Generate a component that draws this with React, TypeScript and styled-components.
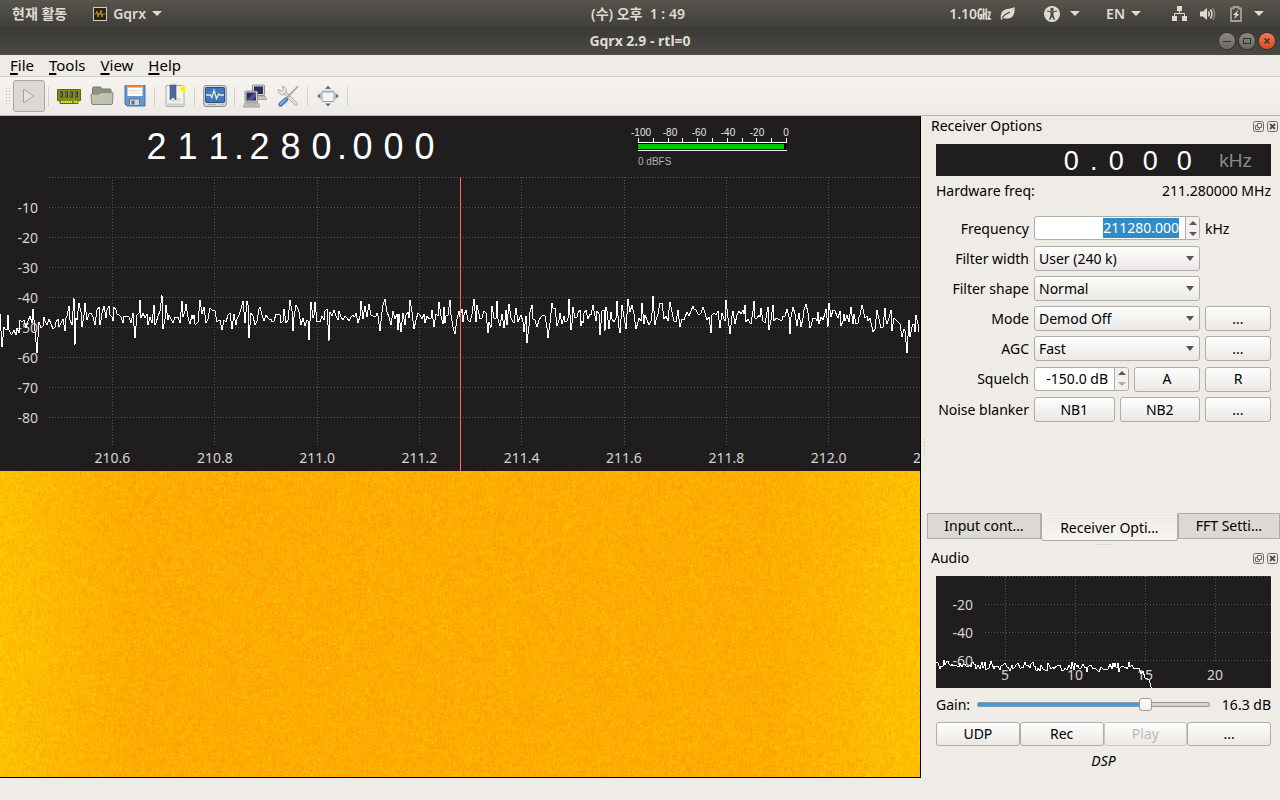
import React, { useEffect, useLayoutEffect, useRef, useState } from "react";
import styled, { createGlobalStyle, css } from "styled-components";

const UI_FONT = `"Noto Sans", "Noto Sans CJK KR", sans-serif`;
const DIGIT_FONT = `"Liberation Sans", Arial, sans-serif`;

const GlobalStyle = createGlobalStyle`
  * { box-sizing: border-box; }
  body {
    margin: 0;
    background: #efebe7;
    color: #000;
    font: 14px/20px ${UI_FONT};
  }
  button, input, select { font: inherit; color: inherit; margin: 0; }
  button { padding: 0; cursor: default; }
  ::selection { background: #308cc6; color: #fff; }
`;

/* ---------- data ---------- */

function makeRandom(seed: number) {
  let s = seed;
  return () => {
    s = (s + 0x6d2b79f5) | 0;
    let t = Math.imul(s ^ (s >>> 15), 1 | s);
    t = (t + Math.imul(t ^ (t >>> 7), 61 | t)) ^ t;
    return ((t ^ (t >>> 14)) >>> 0) / 4294967296;
  };
}

const SPECTRUM_PEAKS: Record<number, number> = {
  2: 170, 37: 176, 33: 132, 74: 121, 75: 168, 85: 126, 135: 161, 162: 118, 182: 124,
  200: 123, 249: 161, 290: 123, 309: 163, 329: 164, 385: 122, 410: 123, 450: 123,
  474: 122, 488: 156, 497: 124, 527: 166, 548: 161, 569: 122, 600: 158, 617: 124,
  653: 119, 670: 125, 726: 123, 754: 124, 790: 157, 829: 126, 873: 155, 892: 154, 907: 176,
};

function spectrumPoints() {
  const rnd = makeRandom(2118);
  const out: string[] = [];
  let skip = 0;
  for (let x = 0; x < 920; x++) {
    const peak = SPECTRUM_PEAKS[x];
    if (peak === undefined && skip > 0) {
      skip--;
      continue;
    }
    const left = Math.max(0, 1 - x / 90);
    const right = Math.max(0, (x - 840) / 80);
    const base = 139 + 12 * left + 10 * Math.min(1, right);
    const spread = ((rnd() + rnd() + rnd()) / 3 - 0.5) * 42;
    const dip = rnd() > 0.9 ? rnd() * 9 : 0;
    out.push(`${x},${peak ?? Math.round(base + spread + dip)}`);
    skip = rnd() > 0.35 ? 1 : 0;
  }
  return out.join(" ");
}

function audioPoints() {
  const rnd = makeRandom(77);
  const out: string[] = [];
  for (let x = 0; x <= 216; x += rnd() > 0.5 ? 2 : 1) {
    let base = 89 + Math.min(2, x / 60);
    if (x > 198) base += (x - 198) ** 2 / 14;
    out.push(`${x},${Math.round(base + (rnd() + rnd() - 1) * 6)}`);
  }
  return out.join(" ");
}

const SPECTRUM = spectrumPoints();
const AUDIO = audioPoints();

/* ---------- desktop bar and title bar ---------- */

const Window = styled.div`
  display: flex;
  flex-direction: column;
  min-height: 100vh;
`;

const DesktopBar = styled.header`
  display: grid;
  grid-template-columns: 1fr auto 1fr;
  align-items: center;
  height: 27px;
  padding: 0 16px 0 12px;
  background: linear-gradient(#57544d, #403f3a);
  color: #dfdbd2;
  font-size: 14px;
`;

const BarGroup = styled.div<{ $end?: boolean }>`
  display: flex;
  align-items: center;
  justify-content: ${(p) => (p.$end ? "flex-end" : "flex-start")};
`;

const BarItem = styled.button<{ $left?: number; $gap?: number }>`
  display: flex;
  align-items: center;
  gap: ${(p) => p.$gap ?? 6}px;
  border: 0;
  background: none;
  font-weight: 600;
  white-space: pre;
  margin-left: ${(p) => p.$left ?? 0}px;
`;

const Caret = styled.span`
  width: 0;
  height: 0;
  border: 5px solid transparent;
  border-top-color: #dfdbd2;
  border-bottom-width: 0;
`;

const TitleBar = styled.div`
  display: grid;
  grid-template-columns: 1fr auto 1fr;
  align-items: center;
  height: 28px;
  padding: 0 5px;
  background: linear-gradient(#3c3b37 10%, #4a4944);
  color: #dfdbd2;
`;

const Title = styled.h1`
  grid-column: 2;
  margin: 0;
  font-size: 14px;
  line-height: 20px;
  font-weight: 700;
`;

const WindowButtons = styled.div`
  display: flex;
  justify-content: flex-end;
  gap: 4px;
`;

const RoundButton = styled.button<{ $close?: boolean }>`
  display: grid;
  place-items: center;
  width: 16px;
  height: 16px;
  border: 0;
  border-radius: 50%;
  background: ${(p) => (p.$close ? "linear-gradient(#f2795a, #df4a1b)" : "linear-gradient(#8b8982, #6b6963)")};
  box-shadow: 0 0 0 1px #33322e;
  color: #33322e;
`;

/* ---------- menu and tool bars ---------- */

const MenuBar = styled.nav`
  display: flex;
  align-items: flex-start;
  gap: 15px;
  height: 22px;
  padding-left: 10px;
  border-bottom: 1px solid #cfccc8;
  font-size: 15px;
`;

const MenuButton = styled.button`
  border: 0;
  background: none;
  &::first-letter {
    text-decoration: underline;
    text-decoration-thickness: 2px;
    text-underline-offset: 2px;
  }
`;

const ToolBar = styled.div`
  display: flex;
  align-items: center;
  height: 39px;
  padding-left: 5px;
  background: linear-gradient(#f7f4f0, #eeeae6);
  border-bottom: 1px solid #b7b4b0;
`;

const dots = css`
  background-image: radial-gradient(circle, #c2bfbb 0 0.8px, transparent 1px);
  background-size: 3px 3px;
`;

const Grip = styled.span`
  width: 6px;
  height: 18px;
  margin-right: 2px;
  ${dots}
`;

const ToolButton = styled.button<{ $pressed?: boolean }>`
  display: grid;
  place-items: center;
  width: ${(p) => (p.$pressed ? 32 : 33)}px;
  height: 32px;
  border: 1px solid ${(p) => (p.$pressed ? "#aaa6a2" : "transparent")};
  border-radius: 3px;
  background: ${(p) => (p.$pressed ? "#dcd8d4" : "none")};
`;

const ToolSeparator = styled.span`
  width: 1px;
  height: 19px;
  margin: 0 3px;
  background: #d3d0cc;
`;

/* ---------- main split ---------- */

const Body = styled.main`
  display: grid;
  grid-template-columns: minmax(0, 1fr) 359px;
  flex: 1;
  padding-bottom: 22px;
`;

const ReceiverView = styled.section`
  display: flex;
  flex-direction: column;
  background: #1f1d1e;
  border-right: 1px solid #000;
  border-bottom: 1px solid #000;
`;

const ViewHeader = styled.div`
  display: flex;
  height: 61px;
  padding-left: 141px;
  gap: 191px;
`;

const Digits = styled.output<{ $small?: boolean }>`
  display: flex;
  color: #fff;
  font-family: ${DIGIT_FONT};
  font-size: ${(p) => (p.$small ? 27 : 36)}px;
  line-height: ${(p) => (p.$small ? 35 : 62)}px;
`;

const Digit = styled.span<{ $w: number }>`
  width: ${(p) => p.$w}px;
  text-align: center;
`;

const Plot = styled.svg<{ $h: number }>`
  display: block;
  width: 100%;
  height: ${(p) => p.$h}px;
  background: #1f1d1e;
  font-family: ${UI_FONT};
  font-size: 14px;
  shape-rendering: crispEdges;
  & .grid { stroke: #57555a; stroke-dasharray: 1 2; }
  & text { fill: #d4d4d4; }
`;

const WaterfallCanvas = styled.canvas`
  display: block;
  flex: 1;
  width: 100%;
  min-height: 0;
  height: 306px;
  background: #ffac00;
`;

/* ---------- dock ---------- */

const Dock = styled.aside`
  display: grid;
  grid-template-columns: 6px minmax(0, 1fr);
`;

const SplitHandle = styled.span<{ $flat?: boolean }>`
  align-self: center;
  justify-self: center;
  width: ${(p) => (p.$flat ? 18 : 3)}px;
  height: ${(p) => (p.$flat ? 3 : 18)}px;
  ${dots}
`;

const DockColumn = styled.div`
  display: flex;
  flex-direction: column;
`;

const DockTitle = styled.div`
  display: flex;
  align-items: center;
  height: 20px;
  gap: 3px;
  padding: 0 2px 0 4px;
`;

const DockName = styled.h2`
  flex: 1;
  margin: 0;
  font-size: 14px;
  line-height: 20px;
  font-weight: 400;
`;

const DockButton = styled.button`
  display: grid;
  place-items: center;
  width: 11px;
  height: 11px;
  border: 0;
  background: none;
`;

const Panel = styled.div`
  margin: 0 9px;
`;

const OffsetDisplay = styled.div`
  display: flex;
  justify-content: flex-end;
  gap: 18px;
  height: 32px;
  margin-top: 8px;
  padding-right: 19px;
  background: #1f1d1e;
`;

const Unit = styled.span`
  color: #8c8a8c;
  font: 19px/33px ${DIGIT_FONT};
`;

const HardwareRow = styled.div`
  display: flex;
  justify-content: space-between;
  margin: 5px 0 15px;
`;

const Form = styled.div`
  display: grid;
  grid-template-columns: 93px minmax(0, 1fr) 66px;
  grid-template-rows: repeat(5, 25px) 26px 25px;
  gap: 5px;
  align-items: center;
`;

const Label = styled.label`
  justify-self: end;
  white-space: nowrap;
`;

const FieldRow = styled.div`
  display: flex;
  align-items: flex-end;
  gap: 5px;
`;

const raised = css`
  border: 1px solid #b0aca8;
  border-radius: 3px;
  background: linear-gradient(#fefefe, #eae8e6);
`;

const PushButton = styled.button<{ $h?: number }>`
  ${raised}
  flex: 1;
  height: ${(p) => p.$h ?? 25}px;
  line-height: 22px;
  &:disabled { color: #bdbab7; border-color: #c9c6c3; }
`;

const SelectBox = styled.div`
  position: relative;
  &::after {
    content: "";
    position: absolute;
    right: 6px;
    top: 10px;
    border: 4px solid transparent;
    border-top: 5px solid #555;
    border-bottom: 0;
    pointer-events: none;
  }
`;

const Select = styled.select`
  ${raised}
  display: block;
  appearance: none;
  width: 100%;
  height: 25px;
  padding: 0 4px;
`;

const SpinBox = styled.div<{ $w?: number }>`
  display: flex;
  align-self: start;
  width: ${(p) => (p.$w ? `${p.$w}px` : "100%")};
  height: 24px;
  border: 1px solid #b0aca8;
  border-radius: 3px;
  background: #fff;
  overflow: hidden;
`;

const SpinInput = styled.input`
  flex: 1;
  min-width: 0;
  border: 0;
  outline: 0;
  padding: 0 6px 0 0;
  background: transparent;
  text-align: right;
`;

const SpinArrows = styled.div`
  display: grid;
  grid-template-rows: 1fr 1fr;
  width: 14px;
  border-left: 1px solid #b0aca8;
  background: #f2f0ee;
`;

const SpinArrow = styled.button<{ $down?: boolean }>`
  display: grid;
  place-items: center;
  border: 0;
  background: none;
  &::after {
    content: "";
    border: 4px solid transparent;
    ${(p) => (p.$down ? "border-top-color: #555; border-bottom: 0;" : "border-bottom-color: #555; border-top: 0;")}
  }
  &:disabled { opacity: 0.45; }
`;

const Tabs = styled.div`
  display: flex;
  align-items: flex-start;
  height: 28px;
  margin-top: auto;
`;

const Tab = styled.button<{ $active?: boolean; $grow: number }>`
  flex: ${(p) => p.$grow} 1 0;
  min-width: 0;
  height: ${(p) => (p.$active ? 28 : 26)}px;
  line-height: ${(p) => (p.$active ? 27 : 24)}px;
  border: 1px solid #b0aca8;
  border-top-color: ${(p) => (p.$active ? "transparent" : "#b0aca8")};
  border-radius: ${(p) => (p.$active ? "0 0 3px 3px" : "0")};
  background: ${(p) => (p.$active ? "linear-gradient(#efebe7, #f8f5f1)" : "#dcd8d4")};
`;

const HandleRow = styled.div`
  display: grid;
  height: 7px;
`;

const AudioPanel = styled(Panel)`
  margin-top: 8px;
`;

const GainRow = styled.div`
  display: flex;
  align-items: center;
  height: 34px;
`;

const Slider = styled.input`
  appearance: none;
  flex: 1;
  min-width: 0;
  height: 14px;
  margin: 0 12px 2px 7px;
  background: none;
  &::-webkit-slider-runnable-track {
    height: 5px;
    border: 1px solid #8f9ba3;
    border-radius: 2px;
    background: linear-gradient(to right, #3a9fe0 var(--fill), #d6d2ce var(--fill));
  }
  &::-webkit-slider-thumb {
    appearance: none;
    width: 13px;
    height: 13px;
    margin-top: -5px;
    border: 1px solid #9d9995;
    border-radius: 3px;
    background: linear-gradient(#fff, #f0eeec);
  }
`;

const ButtonRow = styled.div`
  display: flex;
`;

const Status = styled.div`
  height: 32px;
  line-height: 30px;
  text-align: center;
  font-style: italic;
`;

/* ---------- icons ---------- */

const AppIcon = () => (
  <svg width="14" height="14" viewBox="0 0 14 14">
    <rect x=".5" y=".5" width="13" height="13" fill="#2e230c" stroke="#cfccc4" />
    <path d="M2 7h1l1-3 1 6 1-4 1 2 1-5 1 7 1-3h2" fill="none" stroke="#b98a2c" />
  </svg>
);

const LeafIcon = () => (
  <svg width="15" height="14" viewBox="0 0 15 14">
    <path d="M1 13C0 7 2 3 7 2c3-.6 5-.4 7.500-2 .8 6-1 10-5 11.300-2.500.7-4.500 0-6-.3z" fill="#dfdbd2" />
    <path d="M2 11c2-3 4-4.500 8-6" fill="none" stroke="#4a4843" strokeWidth="1.200" />
  </svg>
);

const AccessIcon = () => (
  <svg width="16" height="16" viewBox="0 0 16 16">
    <circle cx="8" cy="8" r="8" fill="#dfdbd2" />
    <circle cx="8" cy="3.500" r="1.700" fill="#4a4843" />
    <path d="M3 5.500l3.500.8v3L5 13.500l1.300.5L8 10.500 9.700 14l1.300-.5-1.500-4.200v-3l3.500-.8-.3-1L9 5.300H7l-3.700-.8z" fill="#4a4843" />
  </svg>
);

const NetworkIcon = () => (
  <svg width="15" height="15" viewBox="0 0 15 15" fill="#dfdbd2">
    <path d="M5 0h5v5H5zM0 10h5v5H0zM10 10h5v5h-5z" />
    <path d="M7.500 5v2.500M2.500 10V7.500h10V10" fill="none" stroke="#dfdbd2" />
  </svg>
);

const VolumeIcon = () => (
  <svg width="16" height="14" viewBox="0 0 16 14" fill="none" stroke="#dfdbd2" strokeWidth="1.500">
    <path d="M0 4.500h3L7 1v12L3 9.500H0z" fill="#dfdbd2" stroke="none" />
    <path d="M8.500 4.500q1.500 2.500 0 5M10.500 2.500q3 4.500 0 9" />
    <path d="M12.800 1q3.600 6 0 12" stroke="#85827b" />
  </svg>
);

const BatteryIcon = () => (
  <svg width="12" height="16" viewBox="0 0 12 16">
    <path d="M3.500 2.500V1h5v1.500H11V15H1V2.500z" fill="none" stroke="#a3a098" strokeWidth="1.800" />
    <path d="M8.500 3.800L3 9h2.500l-1.500 4L9.500 8H6.800z" fill="#dfdbd2" />
  </svg>
);

const PlayIcon = () => (
  <svg width="14" height="16" viewBox="0 0 14 16">
    <path d="M1.500 1.500L12 8 1.500 14.500z" fill="#e6e3e0" stroke="#a5a29f" strokeLinejoin="round" />
  </svg>
);

const MemoryIcon = () => (
  <svg width="24" height="24" viewBox="0 0 24 24">
    <path d="M.5 5.500h23v11H21v3H3v-3H.5z" fill="#7f9010" stroke="#5c6a0a" />
    <g fill="#3a3a38">
      <path d="M3 7.500h3v6H3zM8 7.500h3v6H8zM13 7.500h3v6h-3zM18 7.500h3v6h-3z" />
    </g>
    <path d="M4 8.500v4M9 8.500v4M14 8.500v4M19 8.500v4" stroke="#8b8b86" />
    <path d="M4 18h11M17 18h3.500" stroke="#dfe83a" strokeWidth="2" strokeDasharray="1.500 .5" />
  </svg>
);

const FolderIcon = () => (
  <svg width="24" height="24" viewBox="0 0 24 24">
    <path d="M2.500 17V4.500q0-1.500 1.500-1.500h6q1 0 1.500 1l.5 1h8q1 0 1 1v10z" fill="#8e9182" stroke="#75786a" />
    <path d="M1 11q-.2-1 1-1h7l2-1.500h11q1.200 0 1 1L22.500 19q0 1.500-1.500 1.500H3q-1.300 0-1.400-1.500z" fill="#bfc2ae" stroke="#86897a" />
  </svg>
);

const SaveIcon = () => (
  <svg width="24" height="24" viewBox="0 0 24 24">
    <path d="M2 1.500h20V22H4l-2-2z" fill="#6696cf" stroke="#4673ad" />
    <path d="M4.500 1h15v11h-15z" fill="#fff" />
    <path d="M4.500 1h15v2.500h-15z" fill="#ee7c2b" />
    <path d="M6 6.500h12M6 9h12" stroke="#d9d9d9" />
    <path d="M6.500 15h10v6.500h-10z" fill="#d5d7d6" stroke="#6c7680" />
    <path d="M8.500 16.500h3v4h-3z" fill="#4f6f95" />
  </svg>
);

const BookmarkIcon = () => (
  <svg width="24" height="24" viewBox="0 0 24 24">
    <rect x="3" y="1.500" width="18" height="21" rx="1" fill="#f3f3f1" stroke="#a8a9a5" />
    <path d="M4 20.500h16" stroke="#c9cac7" strokeWidth="2" />
    <path d="M8 14h10v4H8z" fill="#dedfdc" />
    <path d="M7 1h6v15l-3-3-3 3z" fill="#4b6b96" stroke="#3b567b" strokeWidth=".6" />
    <circle cx="20" cy="5" r="3.800" fill="#fff45c" opacity=".75" />
    <circle cx="20" cy="5" r="2" fill="#ffee00" />
  </svg>
);

const MonitorIcon = () => (
  <svg width="24" height="24" viewBox="0 0 24 24">
    <rect x=".7" y="1.500" width="22.600" height="21" rx="2.500" fill="#d4d5d2" stroke="#8d8f8b" />
    <rect x="2.500" y="3.500" width="19" height="15" rx="1" fill="#3f73b8" stroke="#27508a" />
    <path d="M3 8h18M3 13.500h18M7.500 4v14M12.500 4v14M17 4v14" stroke="#5585c4" strokeWidth=".6" />
    <path d="M3 11h4.500l1.500 2.500 2-7 2.500 8 2-4.500 1.200 1h4.300" fill="none" stroke="#e8f7d0" strokeWidth="1.300" />
    <path d="M5 20.500h8" stroke="#a9aba7" />
    <circle cx="19.500" cy="20.500" r=".8" fill="#7ac143" />
  </svg>
);

const ComputersIcon = () => (
  <svg width="24" height="24" viewBox="0 0 24 24">
    <path d="M12 12h10l1.500 3.500H12z" fill="#c9cac6" stroke="#8c8e8a" strokeWidth=".7" />
    <rect x="9.500" y="1" width="12" height="10.500" rx="1" fill="#d2d3cf" stroke="#7c7e7a" strokeWidth=".8" />
    <rect x="11" y="2.500" width="9" height="7.500" fill="#2b2b62" />
    <rect x="2" y="7" width="12.500" height="11" rx="1" fill="#d2d3cf" stroke="#7c7e7a" strokeWidth=".8" />
    <rect x="3.500" y="8.500" width="9.500" height="8" fill="#2b2b62" />
    <path d="M4 16l7-7h2v3.500L9 16z" fill="#6667a0" opacity=".7" />
    <path d="M2 19h13l1.500 4H.5z" fill="#d4d5d1" stroke="#80827e" strokeWidth=".8" />
    <path d="M3 21h11" stroke="#9a9c98" />
  </svg>
);

const ToolsIcon = () => (
  <svg width="24" height="24" viewBox="0 0 24 24">
    <path d="M8 8l12 12" stroke="#a3a5a1" strokeWidth="3.600" strokeLinecap="round" />
    <path d="M8 8l12 12" stroke="#e2e3e0" strokeWidth="2.200" strokeLinecap="round" />
    <path d="M2.500 5a4 4 0 0 0 6.500 4.500A4 4 0 0 0 6 2.500L7.500 5 6.500 6.800 4.500 7z" fill="#e2e3e0" stroke="#a3a5a1" strokeWidth=".8" />
    <path d="M11.500 13L19 5.500l2.500-3" fill="none" stroke="#a9aba7" strokeWidth="1.800" strokeLinecap="round" />
    <path d="M4.500 20.500l5.500-5" stroke="#4a76b0" strokeWidth="4.400" strokeLinecap="round" />
    <path d="M4.500 20l5-4.500" stroke="#7fa8dc" strokeWidth="2.200" strokeLinecap="round" />
  </svg>
);

const FullscreenIcon = () => (
  <svg width="24" height="24" viewBox="0 0 24 24">
    <rect x="6" y="7" width="12" height="10.500" rx="1" fill="#f4f4f2" stroke="#9a9c98" />
    <path d="M6.500 8h11" stroke="#b9bbb7" strokeWidth="1.500" />
    <g fill="#4a7ab8">
      <path d="M12 1.500L15 5H9zM12 22.500L15 19.500H9zM1 12l3.500-3v6zM23 12l-3.500-3v6z" />
    </g>
  </svg>
);

const FloatIcon = () => (
  <svg width="11" height="11" viewBox="0 0 11 11" fill="none" stroke="#6b6966">
    <rect x=".5" y=".5" width="10" height="10" rx="2" />
    <path d="M4.500 2.500h4v4h-4zM4.500 4.500h-2v4h4v-2" />
  </svg>
);

const CloseIcon = () => (
  <svg width="11" height="11" viewBox="0 0 11 11" fill="none" stroke="#6b6966">
    <rect x=".5" y=".5" width="10" height="10" rx="2" />
    <path d="M3 3l5 5M8 3l-5 5" stroke="#555350" strokeWidth="2" />
  </svg>
);

/* ---------- parts ---------- */

function Readout({ value, cell, dot, small }: { value: string; cell: number; dot: number; small?: boolean }) {
  return (
    <Digits $small={small}>
      {value.split("").map((c, i) => (
        <Digit key={i} $w={c === "." ? dot : cell}>{c}</Digit>
      ))}
    </Digits>
  );
}

function Meter() {
  return (
    <svg width="162" height="61" fontFamily="Liberation Sans, Arial, sans-serif" fontSize="10">
      <g fill="#e6e6e6" textAnchor="middle">
        {["-100", "-80", "-60", "-40", "-20", "0"].map((t, i) => (
          <text key={t} x={10 + i * 29} y="20">{t}</text>
        ))}
      </g>
      <g stroke="#fff" shapeRendering="crispEdges">
        {Array.from({ length: 11 }, (_, i) => (
          <path key={i} d={`M${Math.round(7 + i * 14.8) + 0.5} 22v5`} />
        ))}
        <path d="M7 26.500h149M7 34.500h149" />
      </g>
      <rect x="6" y="27" width="149" height="7" fill="#000" />
      <rect x="7" y="28" width="146" height="5" fill="#00c400" />
      <text x="7" y="49" fill="#b4b4b4">0 dBFS</text>
    </svg>
  );
}

function Spectrum() {
  const levels = [0, -10, -20, -30, -40, -50, -60, -70, -80];
  const freqs = ["210.6", "210.8", "211.0", "211.2", "211.4", "211.6", "211.8", "212.0", "212.2"];
  const at = (i: number) => `${((112.5 + i * 102.3) / 920) * 100}%`;
  return (
    <Plot $h={294} role="img" aria-label="Spectrum">
      {levels.map((l, i) => (
        <React.Fragment key={l}>
          <line className="grid" x1="49" x2="100%" y1={i * 30 + 0.5} y2={i * 30 + 0.5} />
          {l !== 0 && <text x="38" y={i * 30 + 6} textAnchor="end">{l}</text>}
        </React.Fragment>
      ))}
      {freqs.map((f, i) => (
        <React.Fragment key={f}>
          <line className="grid" x1={at(i)} x2={at(i)} y1="0" y2="268" />
          <text x={at(i)} y="286" textAnchor="middle">{f}</text>
        </React.Fragment>
      ))}
      <svg width="100%" height="294" viewBox="0 0 920 294" preserveAspectRatio="none">
        <polyline points={SPECTRUM} fill="none" stroke="#fff" vectorEffect="non-scaling-stroke" />
      </svg>
      <line x1="50%" x2="50%" y1="0" y2="294" stroke="#ff6b6b" />
    </Plot>
  );
}

function Waterfall() {
  const ref = useRef<HTMLCanvasElement>(null);
  useLayoutEffect(() => {
    const c = ref.current;
    const g = c?.getContext("2d");
    if (!c || !g) return;
    const w = (c.width = 920);
    const h = (c.height = 306);
    const img = g.createImageData(w, h);
    const rnd = makeRandom(9);
    for (let y = 0; y < h; y += 2) {
      for (let x = 0; x < w; x++) {
        const edge = Math.max(0, 1 - x / 130, 1 - (w - x) / 150);
        const noise = (rnd() + rnd() + rnd() + rnd() - 2) * 17;
        const spark = rnd() > 0.985 ? 18 : 0;
        const green = 172 + edge * 20 + noise + spark;
        for (let k = 0; k < 2 && y + k < h; k++) {
          const p = ((y + k) * w + x) * 4;
          img.data[p] = 255;
          img.data[p + 1] = green;
          img.data[p + 2] = 0;
          img.data[p + 3] = 255;
        }
      }
    }
    g.putImageData(img, 0, 0);
  }, []);
  return <WaterfallCanvas ref={ref} />;
}

function AudioPlot() {
  return (
    <Plot $h={112} role="img" aria-label="Audio spectrum">
      {[0, -20, -40, -60].map((l, i) => (
        <React.Fragment key={l}>
          <line className="grid" x1="49" x2="100%" y1={i * 28 + 0.5} y2={i * 28 + 0.5} />
          {l !== 0 && <text x="37" y={i * 28 + 6} textAnchor="end">{l}</text>}
        </React.Fragment>
      ))}
      {[5, 10, 15, 20].map((f, i) => (
        <React.Fragment key={f}>
          <line className="grid" x1={69.5 + i * 70} x2={69.5 + i * 70} y1="0" y2="86" />
          <text x={69 + i * 70} y="104" textAnchor="middle">{f}</text>
        </React.Fragment>
      ))}
      <polyline points={AUDIO} fill="none" stroke="#fff" />
    </Plot>
  );
}

function Combo({ id, value }: { id: string; value: string }) {
  return (
    <SelectBox>
      <Select id={id} defaultValue={value}>
        <option>{value}</option>
      </Select>
    </SelectBox>
  );
}

function DockHeader({ name }: { name: string }) {
  return (
    <DockTitle>
      <DockName>{name}</DockName>
      <DockButton aria-label="Float"><FloatIcon /></DockButton>
      <DockButton aria-label="Close"><CloseIcon /></DockButton>
    </DockTitle>
  );
}

export default function App() {
  const freq = useRef<HTMLInputElement>(null);
  const [gain, setGain] = useState(74);
  useEffect(() => {
    freq.current?.focus();
    freq.current?.select();
  }, []);

  return (
    <Window>
      <GlobalStyle />
      <DesktopBar>
        <BarGroup>
          <BarItem>현재 활동</BarItem>
          <BarItem $left={26}><AppIcon />Gqrx<Caret /></BarItem>
        </BarGroup>
        <BarItem>{"(수) 오후  1 : 49"}</BarItem>
        <BarGroup $end>
          <BarItem $gap={9}>1.10㎓<LeafIcon /></BarItem>
          <BarItem $left={29} $gap={10} aria-label="Accessibility"><AccessIcon /><Caret /></BarItem>
          <BarItem $left={26}>EN<Caret /></BarItem>
          <BarItem $left={31} aria-label="Network"><NetworkIcon /></BarItem>
          <BarItem $left={13} aria-label="Volume"><VolumeIcon /></BarItem>
          <BarItem $left={14} aria-label="Battery"><BatteryIcon /></BarItem>
          <BarItem $left={12} aria-label="System"><Caret /></BarItem>
        </BarGroup>
      </DesktopBar>
      <TitleBar>
        <Title>Gqrx 2.9 - rtl=0</Title>
        <WindowButtons>
          <RoundButton aria-label="Minimize">
            <svg width="8" height="8"><path d="M0 4.500h8" stroke="currentColor" /></svg>
          </RoundButton>
          <RoundButton aria-label="Maximize">
            <svg width="8" height="8"><rect x=".5" y="1.500" width="7" height="5" fill="none" stroke="currentColor" /></svg>
          </RoundButton>
          <RoundButton $close aria-label="Close window">
            <svg width="8" height="8"><path d="M1.500 1.500l5 5M6.500 1.500l-5 5" stroke="currentColor" strokeWidth="1.400" /></svg>
          </RoundButton>
        </WindowButtons>
      </TitleBar>
      <MenuBar>
        <MenuButton>File</MenuButton>
        <MenuButton>Tools</MenuButton>
        <MenuButton>View</MenuButton>
        <MenuButton>Help</MenuButton>
      </MenuBar>
      <ToolBar>
        <Grip />
        <ToolButton $pressed aria-label="Start DSP"><PlayIcon /></ToolButton>
        <ToolSeparator />
        <ToolButton aria-label="Configure devices"><MemoryIcon /></ToolButton>
        <ToolButton aria-label="Open settings"><FolderIcon /></ToolButton>
        <ToolButton aria-label="Save settings"><SaveIcon /></ToolButton>
        <ToolSeparator />
        <ToolButton aria-label="Add bookmark"><BookmarkIcon /></ToolButton>
        <ToolSeparator />
        <ToolButton aria-label="I/Q tool"><MonitorIcon /></ToolButton>
        <ToolSeparator />
        <ToolButton aria-label="Remote control"><ComputersIcon /></ToolButton>
        <ToolButton aria-label="Remote settings"><ToolsIcon /></ToolButton>
        <ToolSeparator />
        <ToolButton aria-label="Full screen"><FullscreenIcon /></ToolButton>
        <ToolSeparator />
      </ToolBar>
      <Body>
        <ReceiverView>
          <ViewHeader>
            <Readout value="211.280.000" cell={31} dot={10} />
            <Meter />
          </ViewHeader>
          <Spectrum />
          <Waterfall />
        </ReceiverView>
        <Dock>
          <SplitHandle />
          <DockColumn>
            <DockHeader name="Receiver Options" />
            <Panel>
              <OffsetDisplay>
                <Readout value="0.000" cell={34} dot={11} small />
                <Unit>kHz</Unit>
              </OffsetDisplay>
              <HardwareRow><span>Hardware freq:</span><span>211.280000 MHz</span></HardwareRow>
              <Form>
                <Label htmlFor="freq">Frequency</Label>
                <SpinBox>
                  <SpinInput id="freq" ref={freq} defaultValue="211280.000" />
                  <SpinArrows>
                    <SpinArrow aria-label="Frequency up" />
                    <SpinArrow $down aria-label="Frequency down" />
                  </SpinArrows>
                </SpinBox>
                <span>kHz</span>
                <Label htmlFor="width">Filter width</Label>
                <Combo id="width" value="User (240 k)" />
                <span />
                <Label htmlFor="shape">Filter shape</Label>
                <Combo id="shape" value="Normal" />
                <span />
                <Label htmlFor="mode">Mode</Label>
                <Combo id="mode" value="Demod Off" />
                <PushButton>...</PushButton>
                <Label htmlFor="agc">AGC</Label>
                <Combo id="agc" value="Fast" />
                <PushButton>...</PushButton>
                <Label htmlFor="squelch">Squelch</Label>
                <FieldRow>
                  <SpinBox $w={95}>
                    <SpinInput id="squelch" defaultValue="-150.0 dB" />
                    <SpinArrows>
                      <SpinArrow aria-label="Squelch up" />
                      <SpinArrow $down disabled aria-label="Squelch down" />
                    </SpinArrows>
                  </SpinBox>
                  <PushButton>A</PushButton>
                </FieldRow>
                <PushButton>R</PushButton>
                <Label as="span">Noise blanker</Label>
                <FieldRow>
                  <PushButton>NB1</PushButton>
                  <PushButton>NB2</PushButton>
                </FieldRow>
                <PushButton>...</PushButton>
              </Form>
            </Panel>
            <Tabs role="tablist">
              <Tab role="tab" $grow={114}>Input cont…</Tab>
              <Tab role="tab" $grow={137} $active aria-selected>Receiver Opti…</Tab>
              <Tab role="tab" $grow={102}>FFT Setti…</Tab>
            </Tabs>
            <HandleRow><SplitHandle $flat /></HandleRow>
            <DockHeader name="Audio" />
            <AudioPanel>
              <AudioPlot />
              <GainRow>
                <label htmlFor="gain">Gain:</label>
                <Slider
                  id="gain"
                  type="range"
                  value={gain}
                  onChange={(e) => setGain(Number(e.target.value))}
                  style={{ "--fill": `${gain}%` } as React.CSSProperties}
                />
                <span>16.3 dB</span>
              </GainRow>
              <ButtonRow>
                <PushButton $h={24}>UDP</PushButton>
                <PushButton $h={24}>Rec</PushButton>
                <PushButton $h={24} disabled>Play</PushButton>
                <PushButton $h={24}>...</PushButton>
              </ButtonRow>
              <Status>DSP</Status>
            </AudioPanel>
          </DockColumn>
        </Dock>
      </Body>
    </Window>
  );
}
